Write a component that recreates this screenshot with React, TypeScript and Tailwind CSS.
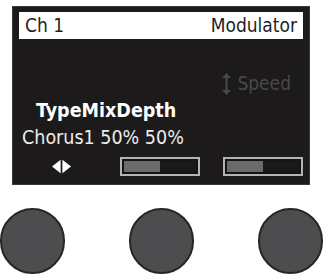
const font = "font-['DejaVu_Sans_Condensed','DejaVu_Sans',sans-serif]";

function Bar() {
  return (
    <div className="w-[80px] h-[19px] border-2 border-[#b4b4b4] p-[2px] bg-[#151313] flex">
      <div className="w-1/2 h-full bg-[#6a6a6a]" />
      <div className="w-1/2 h-full bg-[#1a1818]" />
    </div>
  );
}

function Knob() {
  return <div className="w-[65px] h-[66px] rounded-full bg-[#4d4d4f] border-2 border-[#262626]" />;
}

export default function App() {
  return (
    <div className={`w-[323px] h-[279px] bg-white pt-[6px] overflow-hidden ${font}`}>
      {/* Display */}
      <div className="ml-[12px] w-[298px] h-[179px] bg-[#1c1a1a] border border-[#3a3838] px-[6px] pt-[5px] flex flex-col">
        <div className="h-[27px] bg-white flex items-center justify-between px-[6px] text-[19px] leading-none text-[#1e1e1e]">
          <span>Ch 1</span>
          <span>Modulator</span>
        </div>

        <div className="mt-[33px] h-[23px] flex items-center justify-end pr-[12px] gap-[6px] text-[19px] leading-none text-[#4a4848]">
          <svg width="9" height="22" viewBox="0 0 9 22" fill="#4a4848">
            <polygon points="4.5,0 9,5 0,5" />
            <rect x="3.5" y="4" width="2" height="14" />
            <polygon points="4.5,22 9,17 0,17" />
          </svg>
          <span>Speed</span>
        </div>

        <div className="flex flex-col items-start text-white">
          <div className="mt-[5px] ml-[17px] text-[19.5px] leading-[22px] font-bold">TypeMixDepth</div>
          <div className="mt-[5px] ml-[3px] text-[19.5px] leading-[22px] text-[#ececec]">Chorus1 50% 50%</div>
        </div>

        <div className="mt-[8px] flex items-center">
          <svg className="ml-[33px]" width="21" height="15" viewBox="0 0 21 15" fill="white">
            <polygon points="0,7.5 9.5,0 9.5,15" />
            <polygon points="21,7.5 11.5,0 11.5,15" />
          </svg>
          <div className="ml-[49px] flex gap-[23px]">
            <Bar />
            <Bar />
          </div>
        </div>
      </div>

      {/* Knobs */}
      <div className="mt-[23px] flex justify-between">
        <Knob />
        <Knob />
        <Knob />
      </div>
    </div>
  );
}
